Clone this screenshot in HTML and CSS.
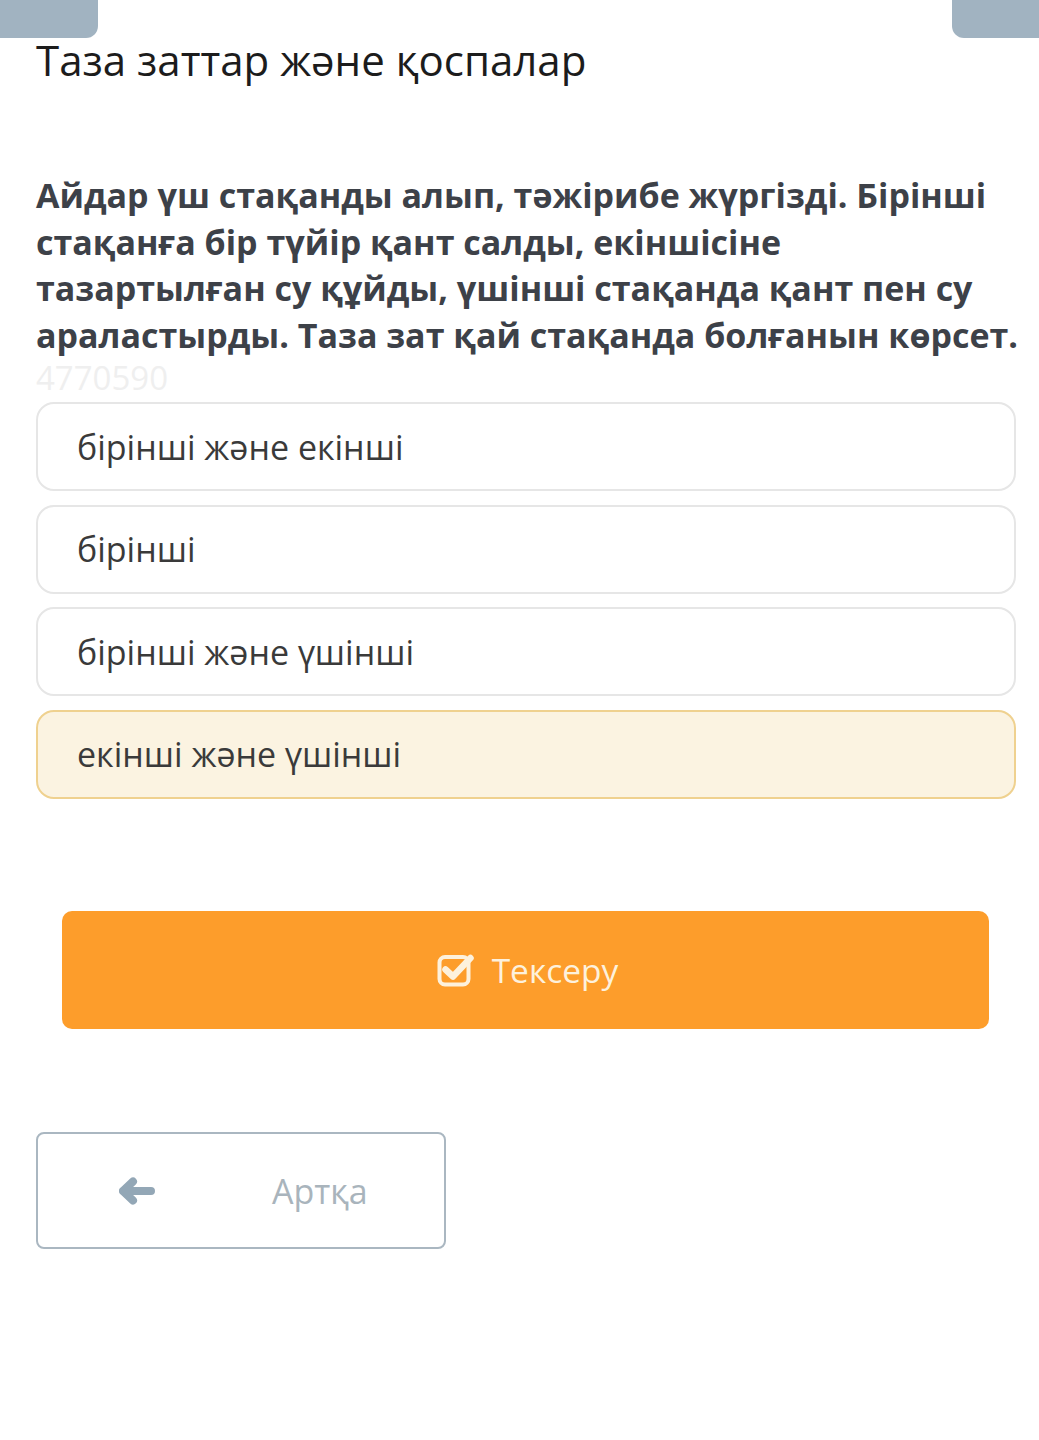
FILE: index.html
```html
<!DOCTYPE html>
<html lang="kk">
<head>
<meta charset="utf-8">
<link rel="stylesheet" href="styles.css">
</head>
<body>
<div class="topbar">
  <div class="tab tab-left"></div>
  <div class="tab tab-right"></div>
</div>
<main class="page">
  <h1 class="title">Таза заттар және қоспалар</h1>
  <p class="question">Айдар үш стақанды алып, тәжірибе жүргізді. Бірінші<br>стақанға бір түйір қант салды, екіншісіне<br>тазартылған су құйды, үшінші стақанда қант пен су<br>араластырды. Таза зат қай стақанда болғанын көрсет.</p>
  <div class="qid">4770590</div>
  <div class="options">
    <div class="option">бірінші және екінші</div>
    <div class="option">бірінші</div>
    <div class="option">бірінші және үшінші</div>
    <div class="option selected">екінші және үшінші</div>
  </div>
  <div class="check-wrap">
    <button class="check-btn">
      <svg class="check-icon" width="38" height="36" viewBox="0 0 38 36">
        <rect x="2.5" y="6" width="29" height="27.5" rx="5.5" fill="none" stroke="#fdf1dc" stroke-width="4"/>
        <path d="M8.5 18.5 L16 25.5 L33.5 7" fill="none" stroke="#fdf1dc" stroke-width="6.5" stroke-linecap="round" stroke-linejoin="round"/>
      </svg>
      <span>Тексеру</span>
    </button>
  </div>
  <button class="back-btn">
    <svg class="arrow" width="36" height="28" viewBox="0 0 36 28">
      <path d="M4 14 L14 4.5 M4 14 L14 23.5 M4 14 L32 14" fill="none" stroke="#93a7b6" stroke-width="8" stroke-linecap="round" stroke-linejoin="round"/>
    </svg>
    <span>Артқа</span>
  </button>
</main>
</body>
</html>
```

FILE: styles.css
```css
* { box-sizing: border-box; }
html, body { margin: 0; padding: 0; background: #ffffff; }
body { font-family: "Open Sans", "Noto Sans", sans-serif; }

.topbar {
  display: flex;
  justify-content: space-between;
  height: 38px;
}
.tab {
  height: 38px;
  background: #a1b3c1;
}
.tab-left { width: 98px; border-bottom-right-radius: 12px; }
.tab-right { width: 87px; border-bottom-left-radius: 12px; }

.page {
  padding: 0 23px 0 36px;
}

.title {
  margin: 0;
  font-weight: 400;
  font-size: 42px;
  line-height: 48px;
  color: #1c1c1c;
  margin-top: -2px;
}

.question {
  margin: 88px 0 0;
  font-weight: 700;
  font-size: 34px;
  line-height: 46.5px;
  color: #3d4148;
  white-space: nowrap;
}

.qid {
  font-size: 33px;
  line-height: 40px;
  color: #efefef;
  font-weight: 400;
}

.options {
  margin-top: 4px;
  display: flex;
  flex-direction: column;
  gap: 13.5px;
}
.option {
  height: 89px;
  display: flex;
  align-items: center;
  padding-left: 39px;
  border: 2px solid #e6e6e6;
  border-radius: 18px;
  font-size: 34px;
  color: #3a3a3a;
  background: #ffffff;
}
.option.selected {
  background: #fbf3e1;
  border-color: #efd18f;
}

.check-wrap {
  padding: 0 27px 0 26px;
  margin-top: 112px;
}
.check-btn {
  width: 100%;
  height: 118px;
  border: 0;
  border-radius: 10px;
  background: #fd9d2b;
  display: flex;
  align-items: center;
  justify-content: center;
  gap: 17px;
  font-family: inherit;
  font-size: 33.5px;
  color: #fdf1dc;
  padding: 0 0 0 4px;
}
.check-icon { margin-top: -2px; }

.back-btn {
  margin-top: 103px;
  width: 410px;
  height: 117px;
  border: 2px solid #aab7c1;
  border-radius: 8px;
  background: #ffffff;
  display: flex;
  align-items: center;
  padding: 2px 0 0 81px;
  font-family: inherit;
  font-size: 34px;
  color: #a9b4bc;
}
.back-btn .arrow { margin-right: 117px; }
```
